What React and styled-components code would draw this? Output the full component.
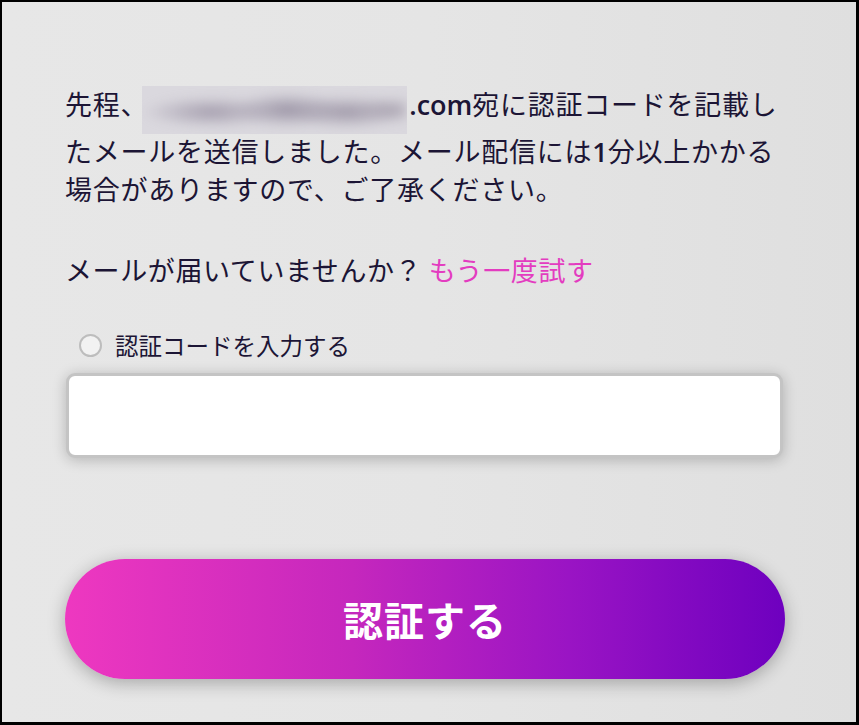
import React, { useState } from 'react';
import styled, { createGlobalStyle } from 'styled-components';

const GlobalStyle = createGlobalStyle`
  html, body {
    margin: 0;
    padding: 0;
    height: 100%;
  }

  body {
    font-family: "Noto Sans CJK JP", "Noto Sans", sans-serif;
    color: #1c1535;
  }
`;

const Frame = styled.div`
  box-sizing: border-box;
  width: 859px;
  height: 725px;
  border-style: solid;
  border-color: #000;
  border-width: 2px 3px 3px 2px;
  background: linear-gradient(to right, #e7e7e7 0%, #e5e5e5 50%, #dfdfdf 100%);
  overflow: hidden;
`;

const Column = styled.div`
  width: 720px;
  margin-left: 63px;
  display: flex;
  flex-direction: column;
`;

const Notice = styled.p`
  margin: 82px 0 0;
  font-size: 27px;
  line-height: 37px;
  letter-spacing: 0.75px;
`;

const Latin = styled.span`
  font-family: "Open Sans", "Noto Sans", sans-serif;
  font-weight: 600;
  letter-spacing: 0;
`;

const Redacted = styled.span`
  display: inline-block;
  vertical-align: middle;
  width: 265px;
  height: 48px;
  margin: 0 2px 0 -6px;
  background: #dad8de;
  overflow: hidden;
  position: relative;
  top: 2px;
`;

// blurred blobs standing in for the hidden address
const Smudge = styled.span`
  display: block;
  height: 100%;
  background:
    radial-gradient(ellipse 70px 16px at 70px 26px, #a59eae 0%, transparent 100%),
    radial-gradient(ellipse 55px 18px at 145px 24px, #9c95a6 0%, transparent 100%),
    radial-gradient(ellipse 60px 17px at 205px 26px, #a099a9 0%, transparent 100%),
    radial-gradient(ellipse 35px 14px at 250px 24px, #b0aab6 0%, transparent 100%);
  filter: blur(5px);
`;

const Resend = styled.p`
  margin: 44px 0 0;
  font-size: 27px;
  line-height: 38px;
  letter-spacing: 0.6px;
`;

const Link = styled.a`
  color: #e33cc0;
  text-decoration: none;
  cursor: pointer;
`;

const RadioRow = styled.label`
  display: flex;
  align-items: center;
  gap: 13px;
  margin: 41px 0 0 14px;
  height: 30px;
  font-size: 23.5px;
  cursor: pointer;
`;

const RadioCircle = styled.span`
  box-sizing: border-box;
  width: 23px;
  height: 23px;
  border-radius: 50%;
  border: 2px solid ${({ checked }) => (checked ? '#b51fc6' : '#bdbdbd')};
  background: #f2f2f2;
  display: flex;
  align-items: center;
  justify-content: center;

  &::after {
    content: '';
    width: 11px;
    height: 11px;
    border-radius: 50%;
    background: ${({ checked }) => (checked ? '#b51fc6' : 'transparent')};
  }
`;

const CodeInput = styled.input`
  box-sizing: border-box;
  display: block;
  width: 717px;
  height: 85px;
  margin: 13px 0 0 1px;
  border: 3px solid #c4c4c4;
  border-radius: 9px;
  background: #fff;
  box-shadow: 0 2px 14px rgba(0, 0, 0, 0.22);
  font-size: 28px;
  padding: 0 20px;
  outline: none;
`;

const SubmitButton = styled.button`
  display: block;
  width: 720px;
  height: 120px;
  margin-top: 101px;
  border: 0;
  border-radius: 60px;
  background: linear-gradient(to right, #ee38c0 0%, #c527bd 40%, #9a14c4 70%, #6e00bf 100%);
  box-shadow: 0 4px 18px rgba(0, 0, 0, 0.28);
  color: #fff;
  font-family: "Noto Sans CJK JP", sans-serif;
  font-size: 40px;
  font-weight: 700;
  letter-spacing: 1px;
  cursor: pointer;
`;

const App = () => {
  const [checked, setChecked] = useState(false);
  const [code, setCode] = useState('');

  return (
    <>
      <GlobalStyle />
      <Frame>
        <Column>
          <Notice>
            先程、
            <Redacted aria-label="メールアドレス">
              <Smudge />
            </Redacted>
            <Latin>.com</Latin>宛に認証コードを記載したメールを送信しました。メール配信には<Latin>1</Latin>分以上かかる場合がありますので、ご了承ください。
          </Notice>
          <Resend>
            メールが届いていませんか？ <Link>もう一度試す</Link>
          </Resend>
          <RadioRow onClick={() => setChecked(!checked)}>
            <RadioCircle checked={checked} />
            認証コードを入力する
          </RadioRow>
          <CodeInput type="text" value={code} onChange={(e) => setCode(e.target.value)} />
          <SubmitButton type="button">認証する</SubmitButton>
        </Column>
      </Frame>
    </>
  );
};

export default App;
